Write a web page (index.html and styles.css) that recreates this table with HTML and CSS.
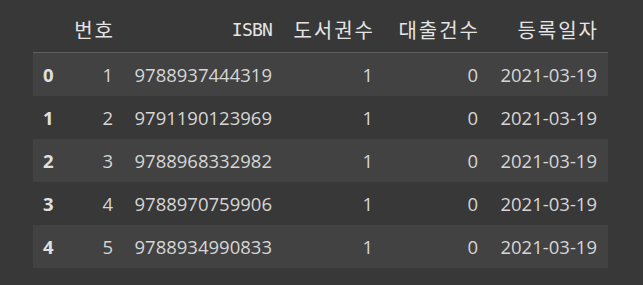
FILE: index.html
```html
<!DOCTYPE html>
<html lang="ko">
<head>
<meta charset="utf-8">
<link rel="stylesheet" href="styles.css">
</head>
<body>
<div class="frame">
  <div class="table">
    <div class="row head">
      <div class="cell idx"></div>
      <div class="cell">번호</div>
      <div class="cell"><span class="mono">ISBN</span></div>
      <div class="cell">도서권수</div>
      <div class="cell">대출건수</div>
      <div class="cell">등록일자</div>
    </div>
    <div class="row even">
      <div class="cell idx">0</div><div class="cell">1</div><div class="cell">9788937444319</div><div class="cell">1</div><div class="cell">0</div><div class="cell">2021-03-19</div>
    </div>
    <div class="row">
      <div class="cell idx">1</div><div class="cell">2</div><div class="cell">9791190123969</div><div class="cell">1</div><div class="cell">0</div><div class="cell">2021-03-19</div>
    </div>
    <div class="row even">
      <div class="cell idx">2</div><div class="cell">3</div><div class="cell">9788968332982</div><div class="cell">1</div><div class="cell">0</div><div class="cell">2021-03-19</div>
    </div>
    <div class="row">
      <div class="cell idx">3</div><div class="cell">4</div><div class="cell">9788970759906</div><div class="cell">1</div><div class="cell">0</div><div class="cell">2021-03-19</div>
    </div>
    <div class="row even">
      <div class="cell idx">4</div><div class="cell">5</div><div class="cell">9788934990833</div><div class="cell">1</div><div class="cell">0</div><div class="cell">2021-03-19</div>
    </div>
  </div>
</div>
</body>
</html>
```
FILE: styles.css
```css
html, body {
  margin: 0;
  padding: 0;
  background: #383838;
}
.frame {
  width: 643px;
  height: 285px;
  padding: 9px 0 0 33px;
  box-sizing: border-box;
}
.table {
  width: 575px;
  display: flex;
  flex-direction: column;
}
.row {
  display: grid;
  grid-template-columns: 29px 62px 159px 101px 105px 119px;
  height: 43px;
  font-family: "Open Sans", "Noto Sans", sans-serif;
  font-size: 18.5px;
  color: #d6d6d6;
}
.row.even {
  background: #424242;
}
.row.head {
  height: 43px;
  border-bottom: 1px solid #5e5e5e;
  font-family: "Noto Sans CJK KR", sans-serif;
  font-size: 20px;
  letter-spacing: 2px;
  color: #e4e4e4;
}
.cell {
  display: flex;
  align-items: center;
  justify-content: flex-end;
  padding-right: 11px;
  white-space: nowrap;
}
.row.head .cell {
  padding-bottom: 2px;
  padding-right: 9px;
}
.cell.idx {
  justify-content: flex-start;
  padding: 0 0 0 10px;
  font-weight: 700;
  color: #e0e0e0;
}
.mono {
  font-family: "DejaVu Sans Mono", monospace;
  font-size: 18px;
  letter-spacing: -0.8px;
  margin-right: 2px;
}
```
